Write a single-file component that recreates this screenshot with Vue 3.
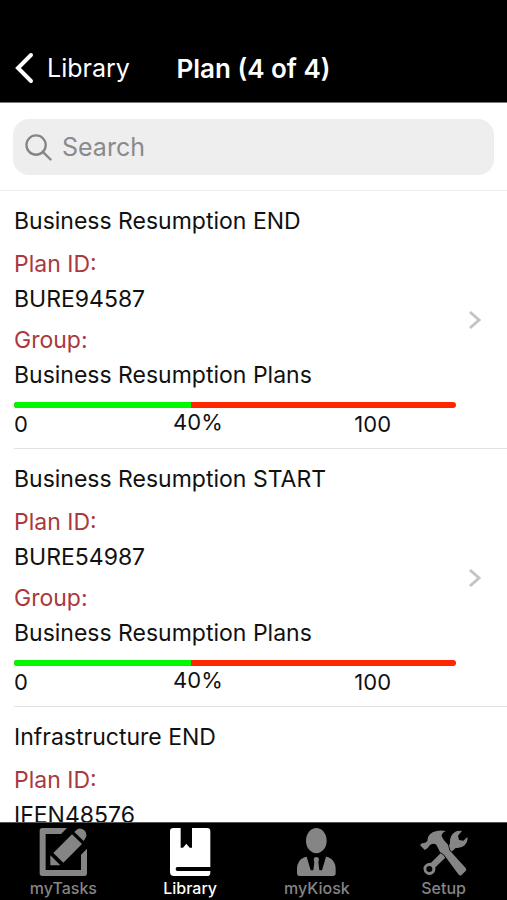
<script setup>
import { ref } from 'vue'

const query = ref('')
const active = ref('Library')

const plans = [
  { title: 'Business Resumption END', id: 'BURE94587', group: 'Business Resumption Plans', progress: 40 },
  { title: 'Business Resumption START', id: 'BURE54987', group: 'Business Resumption Plans', progress: 40 },
  { title: 'Infrastructure END', id: 'IFEN48576' }
]

const tabs = ['myTasks', 'Library', 'myKiosk', 'Setup']
</script>

<template>
  <div class="screen">
    <header class="navbar">
      <a class="back" href="#library">
        <svg class="back-icon" viewBox="0 0 20 32" aria-hidden="true">
          <path d="M17 3 4 16l13 13" />
        </svg>
        Library
      </a>
      <h1 class="heading">Plan (4 of 4)</h1>
    </header>

    <div class="search-area">
      <label class="search">
        <svg class="search-icon" viewBox="0 0 28 28" aria-hidden="true">
          <circle cx="11.5" cy="11.5" r="10" />
          <path d="m18.5 18.5 8 8" />
        </svg>
        <input v-model="query" class="search-input" type="search" placeholder="Search" aria-label="Search" />
      </label>
    </div>

    <main class="list">
      <a v-for="plan in plans" :key="plan.id" class="row" :href="'#' + plan.id">
        <div class="details">
          <h2 class="line">{{ plan.title }}</h2>
          <div class="field">
            <div class="line name">Plan ID:</div>
            <div class="line">{{ plan.id }}</div>
          </div>
          <template v-if="plan.group">
            <div class="field group">
              <div class="line name">Group:</div>
              <div class="line">{{ plan.group }}</div>
            </div>
            <div class="bar">
              <div class="bar-fill" :style="{ width: plan.progress + '%' }"></div>
            </div>
            <div class="scale">
              <span>0</span>
              <span class="current">{{ plan.progress }}%</span>
              <span>100</span>
            </div>
          </template>
        </div>
        <svg v-if="plan.group" class="chevron" viewBox="0 0 14 24" aria-hidden="true">
          <path d="m2 2 9 8-9 8" />
        </svg>
      </a>
    </main>

    <nav class="tabbar">
      <button
        v-for="tab in tabs"
        :key="tab"
        type="button"
        class="tab"
        :class="{ active: active === tab }"
        @click="active = tab"
      >
        <svg class="tab-icon" viewBox="0 0 144 144" aria-hidden="true">
          <template v-if="tab === 'myTasks'">
            <path d="M10 0H84L66 18H20V126H126V80L144 62V136Q144 144 136 144H10Q2 144 2 136V8Q2 0 10 0Z" />
            <path d="M43 75 99 19 129 48 73 104Z" />
            <path d="M34 82 64 112H34Z" />
            <path d="M106 12 113 5Q124-3 136 7Q147 18 139 31L134 39Z" />
          </template>
          <template v-else-if="tab === 'Library'">
            <path d="M22 0H44V59H51L61 47 71 59H78V0H123Q133 0 133 10V117H34Q29 117 29 123T34 129H133V134Q133 144 123 144H24Q12 144 12 132V10Q12 0 22 0Z" />
          </template>
          <template v-else-if="tab === 'myKiosk'">
            <ellipse cx="70" cy="38" rx="31" ry="38" />
            <path d="M34 88 41 86 53 127H61L64 103 62 94Q63 87 70 87T78 94L76 103 79 127H87L99 86 106 88Q127 96 128 122V136Q128 144 120 144H20Q12 144 12 136V122Q13 96 34 88Z" />
          </template>
          <template v-else>
            <path fill-rule="evenodd" d="M90 48Q88 22 105 12Q114 6 126 9L114 23 117 36 130 38 142 27Q145 42 134 52Q123 62 107 60L46 118Q48 131 39 137Q29 144 19 138Q8 130 11 117Q17 104 33 104ZM28 114A9 9 0 1 0 28 132A9 9 0 1 0 28 114Z" />
            <path class="hammer" d="M0 51 7 45Q16 47 22 39Q22 22 38 13Q56 4 78 9Q64 15 65 25L72 37 84 50 88 66 137 120Q141 125 137 129L124 142Q119 144 115 139L72 80 60 72 49 50Q38 43 29 52Q27 59 14 66Z" />
          </template>
        </svg>
        <span class="tab-label">{{ tab }}</span>
      </button>
    </nav>
  </div>
</template>

<style>
body {
  margin: 0;
  background: #fff;
}
</style>

<style scoped>
.screen {
  display: flex;
  flex-direction: column;
  height: 100vh;
  background: #fff;
  color: #111;
  font-family: Inter, "Liberation Sans", sans-serif;
  font-size: 23px;
}

.navbar {
  display: grid;
  grid-template-columns: 1fr auto 1fr;
  align-items: center;
  flex: none;
  height: 68px;
  padding: 34px 14px 0;
  background: #000;
  color: #fff;
  border-bottom: 1px solid #777;
}

.back {
  display: flex;
  align-items: center;
  gap: 13px;
  color: inherit;
  font-size: 25px;
  text-decoration: none;
}

.back-icon {
  width: 20px;
  height: 32px;
  fill: none;
  stroke: currentColor;
  stroke-width: 4;
  stroke-linecap: round;
}

.heading {
  margin: 0;
  font-size: 26px;
  font-weight: 600;
}

.search-area {
  flex: none;
  padding: 16px 13px 15px;
  border-bottom: 1px solid #ececec;
}

.search {
  display: flex;
  align-items: center;
  gap: 10px;
  height: 56px;
  padding: 0 12px;
  border-radius: 16px;
  background: #eee;
}

.search-icon {
  flex: none;
  width: 27px;
  height: 27px;
  fill: none;
  stroke: #858587;
  stroke-width: 2.4;
  stroke-linecap: round;
}

.search-input {
  flex: 1;
  min-width: 0;
  padding: 0;
  border: 0;
  outline: 0;
  background: none;
  color: #111;
  font: inherit;
  font-size: 25px;
  appearance: none;
}

.search-input::placeholder {
  color: #8a8a8d;
  opacity: 1;
}

.list {
  flex: 1;
  min-height: 0;
  overflow-y: auto;
  scrollbar-width: none;
}

.row {
  display: flex;
  align-items: center;
  gap: 12px;
  margin-left: 14px;
  padding: 13px 25px 9px 0;
  border-bottom: 1px solid #e2e2e2;
  color: inherit;
  text-decoration: none;
}

.details {
  flex: 1;
  min-width: 0;
}

.line {
  margin: 0;
  font-size: 23px;
  font-weight: 400;
  line-height: 35px;
}

.field {
  margin-top: 8px;
}

.field.group {
  margin-top: 6px;
}

.name {
  color: #ab3840;
}

.bar {
  height: 6px;
  margin-top: 9px;
  overflow: hidden;
  border-radius: 3px;
  background: #ff2600;
}

.bar-fill {
  height: 100%;
  background: #00f900;
}

.scale {
  display: grid;
  grid-template-columns: 36fr 41fr 23fr;
  margin-top: 1px;
  font-size: 22px;
  line-height: 30px;
}

.current {
  line-height: 26px;
}

.chevron {
  flex: none;
  width: 14px;
  height: 24px;
  fill: none;
  stroke: #c4c4c6;
  stroke-width: 3;
}

.tabbar {
  display: grid;
  grid-template-columns: repeat(4, 1fr);
  flex: none;
  padding: 5px 0 2px;
  border-top: 1px solid #555;
  background: #000;
}

.tab {
  display: flex;
  flex-direction: column;
  align-items: center;
  gap: 2px;
  padding: 0;
  border: 0;
  background: none;
  color: #858585;
  font: inherit;
}

.tab.active {
  color: #fff;
}

.tab-icon {
  width: 48px;
  height: 48px;
  fill: currentColor;
}

.hammer {
  stroke: #000;
  stroke-width: 5;
  paint-order: stroke;
}

.tab-label {
  font-size: 16px;
  font-weight: 500;
  line-height: 20px;
}
</style>
